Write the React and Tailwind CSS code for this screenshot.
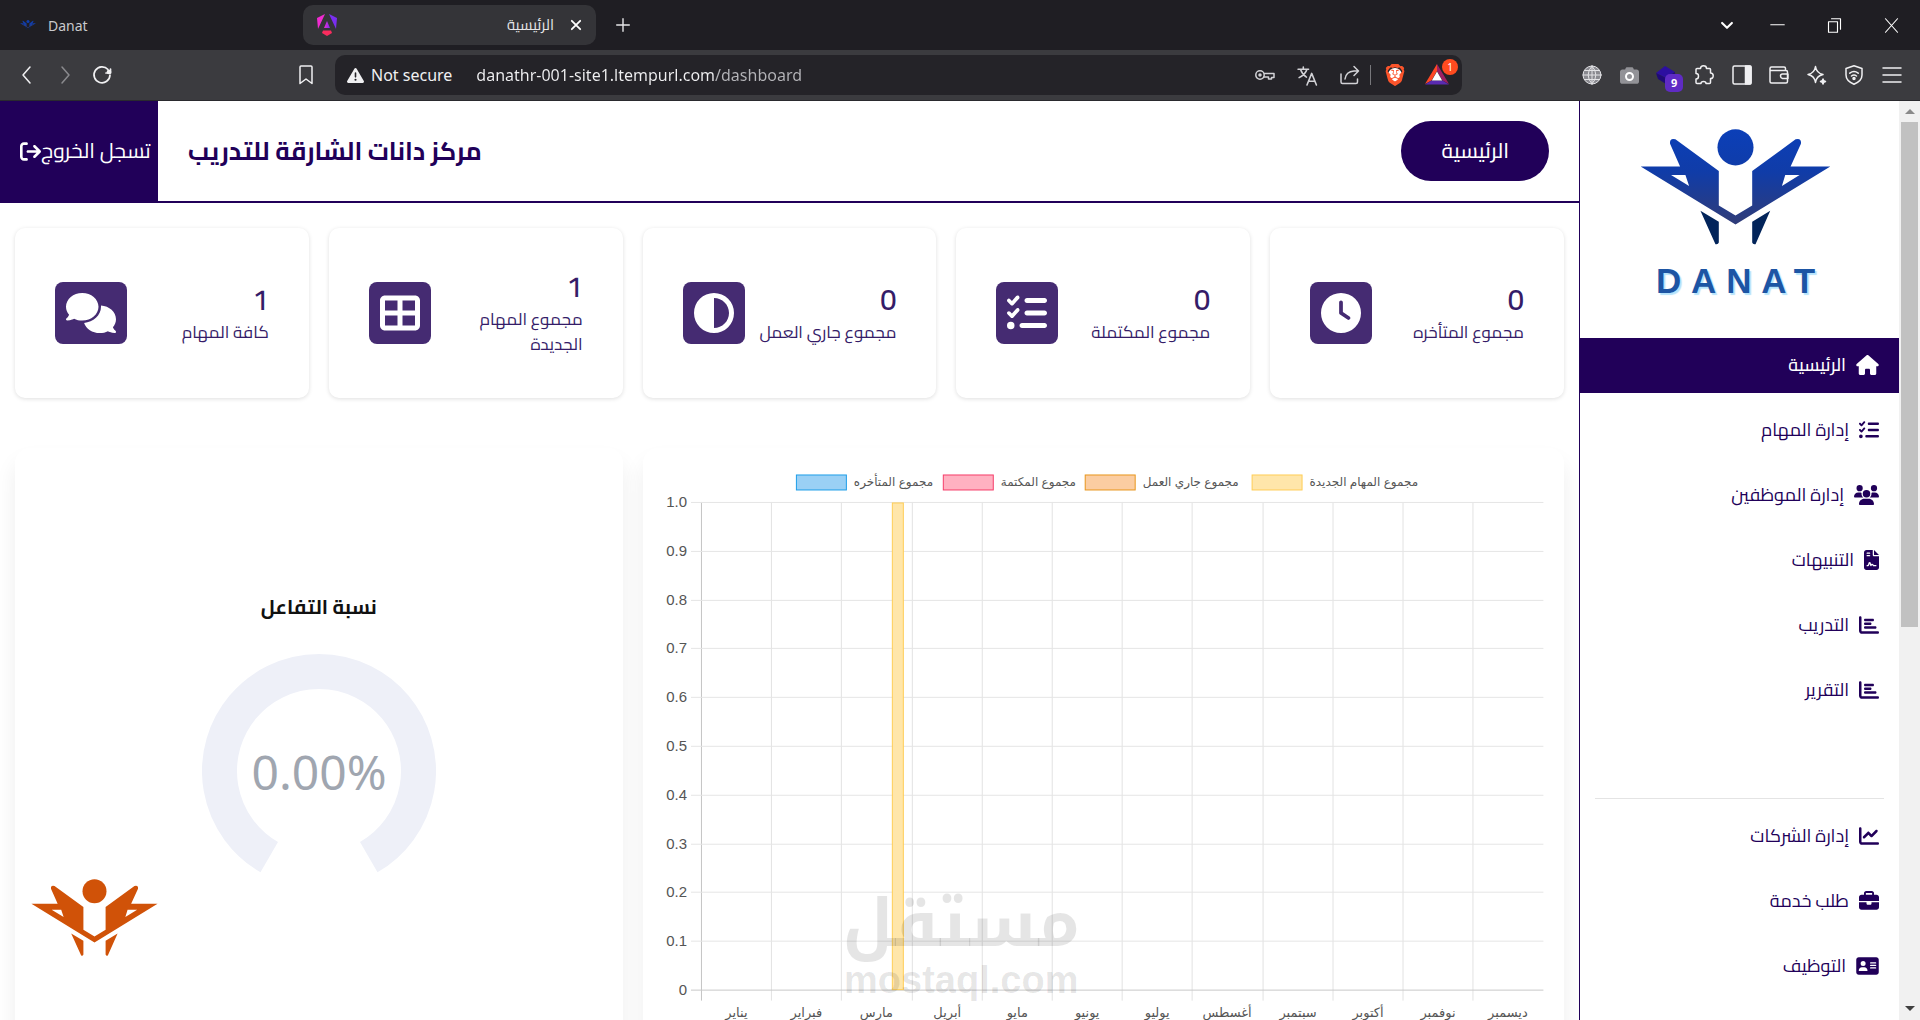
import React from 'react';
import { SiBrave } from 'react-icons/si';
import {
  FaAddressCard,
  FaArrowRightFromBracket,
  FaBriefcase,
  FaCamera,
  FaChartBar,
  FaChartLine,
  FaCircleHalfStroke,
  FaClock,
  FaComments,
  FaFileContract,
  FaHouse,
  FaListCheck,
  FaTableCellsLarge,
  FaTriangleExclamation,
  FaUsers,
} from 'react-icons/fa6';

const stats = [
  { label: 'كافة المهام', value: 1, Icon: FaComments, size: 'h-10 w-[50px]' },
  { label: 'مجموع المهام الجديدة', value: 1, Icon: FaTableCellsLarge },
  { label: 'مجموع جاري العمل', value: 0, Icon: FaCircleHalfStroke },
  { label: 'مجموع المكتملة', value: 0, Icon: FaListCheck },
  { label: 'مجموع المتأخره', value: 0, Icon: FaClock },
];

const mainLinks = [
  { label: 'الرئيسية', Icon: FaHouse, size: 'h-5 w-[23px]', active: true },
  { label: 'إدارة المهام', Icon: FaListCheck },
  { label: 'إدارة الموظفين', Icon: FaUsers, size: 'h-5 w-[25px]' },
  { label: 'التنبيهات', Icon: FaFileContract, size: 'h-5 w-[15px]' },
  { label: 'التدريب', Icon: FaChartBar },
  { label: 'التقرير', Icon: FaChartBar },
];

const moreLinks = [
  { label: 'إدارة الشركات', Icon: FaChartLine },
  { label: 'طلب خدمة', Icon: FaBriefcase },
  { label: 'التوظيف', Icon: FaAddressCard, size: 'h-5 w-[23px]' },
];

const months = ['يناير', 'فبراير', 'مارس', 'أبريل', 'مايو', 'يونيو', 'يوليو', 'أغسطس', 'سبتمبر', 'أكتوبر', 'نوفمبر', 'ديسمبر'];

const series = [
  { label: 'مجموع المتأخره', x: 153, fill: '#9ad0f5', stroke: '#1d9de8' },
  { label: 'مجموع المكتمة', x: 300, fill: '#ffb1c1', stroke: '#f53d69' },
  { label: 'مجموع جاري العمل', x: 442, fill: '#fbcda2', stroke: '#e8961c' },
  { label: 'مجموع المهام الجديدة', x: 609, fill: '#ffe6aa', stroke: '#ffcd56' },
];

const Figure = () => (
  <>
    <circle cx="496" cy="141" r="54" />
    <path
      fillRule="evenodd"
      d="M212 198H330L300 130Q298 112 316 117L446 212V315L496 345L546 315V212L676 117Q694 112 692 130L661 198H780L496 372ZM303 224L357 257L346 224ZM688 224L635 257L645 224Z"
    />
  </>
);

const Feet = () => (
  <path d="M391 331L446 364V426Q444 433 436 431ZM600 331L546 364V426Q548 433 556 431Z" />
);

const BlueMark = ({ className }) => (
  <svg viewBox="210 86 572 348" className={className} aria-hidden="true">
    <defs>
      <linearGradient id="mark" x1="0" y1="86" x2="0" y2="372" gradientUnits="userSpaceOnUse">
        <stop offset="0" stopColor="#0b3fb8" />
        <stop offset="0.45" stopColor="#103ca8" />
        <stop offset="1" stopColor="#303c78" />
      </linearGradient>
    </defs>
    <g fill="url(#mark)">
      <Figure />
    </g>
    <g fill="#02245a">
      <Feet />
    </g>
  </svg>
);

const OrangeMark = ({ className }) => (
  <svg viewBox="210 86 572 348" className={className} fill="#d05208" aria-hidden="true">
    <Figure />
    <Feet />
  </svg>
);

const Stroke = ({ className = 'size-5', children, width = 1.5 }) => (
  <svg viewBox="0 0 20 20" className={className} fill="none" stroke="currentColor" strokeWidth={width} strokeLinecap="round" strokeLinejoin="round" aria-hidden="true">
    {children}
  </svg>
);

const TabStrip = () => (
  <div className="flex h-[50px] items-center bg-[#1f1e23] pl-5 text-[14px] text-[#e6e6e8]">
    <button className="flex w-[283px] items-center gap-3 text-[#c9c9cc]">
      <BlueMark className="w-4" />
      Danat
    </button>
    <div className="flex h-10 w-[293px] items-center rounded-[10px] bg-[#343438] pr-[14px] pl-[14px]">
      <svg viewBox="0 0 20 22" className="h-[22px] w-5" aria-hidden="true">
        <defs>
          <linearGradient id="ng" x1="0" x2="1">
            <stop offset="0" stopColor="#f02bd0" />
            <stop offset="1" stopColor="#7a2ff0" />
          </linearGradient>
        </defs>
        <path fill="#f02bd0" d="M8 0L0 4L1 15Z" />
        <path fill="#7a2ff0" d="M12 0L20 4L19 15Z" />
        <path fill="url(#ng)" d="M10 7L13 14H7Z" />
        <path fill="#fa2c5e" d="M6 16.500H14L15 19L10 22L5 19Z" />
      </svg>
      <span className="ml-auto font-['Cairo','Noto_Sans',sans-serif] text-[15px]" dir="rtl">الرئيسية</span>
      <button aria-label="Close tab" className="ml-4 text-white">
        <Stroke className="size-3" width={3}><path d="M3 3L17 17M17 3L3 17" /></Stroke>
      </button>
    </div>
    <button aria-label="New tab" className="ml-5">
      <Stroke className="size-[14px]" width={2}><path d="M10 1V19M1 10H19" /></Stroke>
    </button>
    <div className="mr-[21px] ml-auto flex items-center gap-[42px] text-white">
      <button aria-label="Search tabs" className="-mr-[6px]"><Stroke className="size-[14px]" width={3}><path d="M3 7L10 14L17 7" /></Stroke></button>
      <button aria-label="Minimize"><Stroke className="size-[15px]" width={1.5}><path d="M1 9H19" /></Stroke></button>
      <button aria-label="Restore"><Stroke className="size-[15px]" width={1.5}><path d="M2 5H14V19H2ZM6 1H18V15" /></Stroke></button>
      <button aria-label="Close"><Stroke className="size-[15px]" width={1.5}><path d="M2 1L18 19M18 1L2 19" /></Stroke></button>
    </div>
  </div>
);

const Toolbar = () => (
  <div className="flex h-[51px] items-center border-b border-[#2a2a2e] bg-[#3b3b3f] pl-[17px] text-[#f0f0f2]">
    <button aria-label="Back"><Stroke><path d="M13 2L6 10L13 18" /></Stroke></button>
    <button aria-label="Forward" className="ml-[18px] text-[#8a8a8e]"><Stroke><path d="M7 2L14 10L7 18" /></Stroke></button>
    <button aria-label="Reload" className="ml-[17px]">
      <Stroke width={1.7}>
        <path d="M16 4.500A8 8 0 1 0 18 10M18.500 4V8H14" />
        <circle cx="17" cy="7" r="1.500" fill="currentColor" />
      </Stroke>
    </button>
    <button aria-label="Bookmark" className="ml-[184px]"><Stroke><path d="M5 1H15Q16 1 16 2V18.500L10 14L4 18.500V2Q4 1 5 1Z" /></Stroke></button>
    <div className="ml-[19px] flex h-10 w-[1127px] items-center rounded-[10px] bg-[#242328] pr-[13px] pl-3 text-base">
      <FaTriangleExclamation className="size-[17px]" />
      <span className="ml-[7px] shrink-0">Not secure</span>
      <input
        type="text"
        aria-label="Address"
        dir="ltr"
        defaultValue="danathr-001-site1.ltempurl.com/dashboard"
        className="ml-6 min-w-0 flex-1 bg-[linear-gradient(90deg,#f0f0f2_239px,#b4b4b8_239px)] bg-clip-text text-transparent outline-none"
      />
      <div className="flex items-center gap-[22px] text-[#d2d2d6]">
        <button aria-label="Passwords">
          <Stroke><circle cx="5" cy="10" r="4.200" /><circle cx="5" cy="10" r="1" fill="currentColor" /><path d="M9.500 8.500H19V12.500H16.500V14H13.500V12H9" /></Stroke>
        </button>
        <button aria-label="Translate">
          <Stroke className="size-[21px]"><path d="M1 4H11M6 2V4M9.500 4Q8 9 2 12M3.500 4.500Q5 9 9 11.500M9.500 19L14 8L18.500 19M11 15.500H17" /></Stroke>
        </button>
        <button aria-label="Share">
          <Stroke><path d="M1 9V17Q1 18.500 2.500 18.500H16Q17.500 18.500 17.500 17V14M5 14Q6 6.500 14 6H18.500M14 1.500L18.500 6L14 10.500" /></Stroke>
        </button>
      </div>
      <div className="ml-[10px] h-5 w-px bg-[#77777b]" />
      <button aria-label="Brave Shields" className="relative ml-[13px]">
        <span className="absolute top-1 left-1 h-[14px] w-[14px] rounded-full bg-white" />
        <SiBrave className="relative size-[22px] text-[#fb542b]" />
      </button>
      <button aria-label="Rewards" className="relative ml-[19px]">
        <svg viewBox="0 0 24 22" className="h-[22px] w-6" aria-hidden="true">
          <path fill="#ff4724" d="M12 0L0 20L6.500 16.500L12 7Z" />
          <path fill="#9e1f63" d="M12 0L24 20L17.500 16.500L12 7Z" />
          <path fill="#5a2bb0" d="M0 20.500L6.500 16.500H17.500L24 20.500Z" />
          <path fill="#fff" d="M12 7.500L17.200 16.500H6.800Z" />
        </svg>
        <span className="absolute -top-[5px] -right-[9px] size-4 rounded-full bg-[#ff4b1f] text-center text-[10px] leading-4 text-white">1</span>
      </button>
    </div>
    <div className="mr-[18px] ml-auto flex w-[320px] items-center justify-between">
      <button aria-label="Web extension">
        <Stroke className="size-5 text-[#e3e3e6]" width={1}>
          <circle cx="10" cy="10" r="9" fill="#8a8a90" />
          <path d="M10 1V19M1 10H19M2.500 5.500H17.500M2.500 14.500H17.500M10 1Q2 10 10 19M10 1Q18 10 10 19" />
        </Stroke>
      </button>
      <button aria-label="Screenshot extension" className="relative">
        <FaCamera className="size-[19px] text-[#929297]" />
        <span className="absolute top-[6px] left-[5px] size-[9px] rounded-full border-2 border-white bg-[#929297]" />
      </button>
      <button aria-label="Layers extension" className="relative">
        <svg viewBox="0 0 20 20" className="size-5" aria-hidden="true">
          <path fill="#2c0fa0" d="M9 1L19 7L10 13L0 8Z" />
          <path fill="#1f0a78" d="M0 8L10 13L19 7V13L10 19L2 14Z" />
        </svg>
        <span className="absolute top-[9px] left-[9px] size-[18px] rounded-[5px] bg-[#5f2bc4] text-center text-[11px] leading-[18px] font-bold text-white">9</span>
      </button>
      <button aria-label="Extensions">
        <Stroke><path d="M2 4.500Q2 3.500 3 3.500H6.500Q6.500 0.800 9.500 0.800T12.500 3.500H15.500Q16.500 3.500 16.500 4.500V8Q19.200 8 19.200 10.800T16.500 13.500V17.500Q16.500 18.500 15.500 18.500H12Q12 16.500 9.500 16.500T7 18.500H3Q2 18.500 2 17.500V14Q4.500 14 4.500 11.200T2 8.500Z" /></Stroke>
      </button>
      <button aria-label="Side panel">
        <Stroke><rect x="1" y="1" width="18" height="18" rx="1.500" /><path d="M13.500 1H18Q19 1 19 2V18Q19 19 18 19H13.500Z" fill="currentColor" /></Stroke>
      </button>
      <button aria-label="Wallet">
        <Stroke><path d="M16.500 5.500V3.500Q16.500 2 15 2H2.500Q1 2 1 3.500V16.500Q1 18 2.500 18H17Q18.500 18 18.500 16.500V7Q18.500 5.500 17 5.500H1M19 9H13.500Q11.500 9 11.500 11T13.500 13.500H19Z" /></Stroke>
      </button>
      <button aria-label="Leo AI">
        <Stroke><path d="M8.500 1.500Q9.500 8.200 16 9.500Q9.500 10.800 8.500 17.500Q7.500 10.800 1 9.500Q7.500 8.200 8.500 1.500Z" /><path fill="currentColor" d="M16 14L16.700 15.800L18.500 16.500L16.700 17.200L16 19L15.300 17.200L13.500 16.500L15.300 15.800Z" /></Stroke>
      </button>
      <button aria-label="VPN">
        <Stroke><path d="M10 0.800L18 3.500V10Q18 16 10 19.200Q2 16 2 10V3.500ZM5.800 8.200Q10 5 14.200 8.200M7.500 11Q10 9 12.500 11" /><circle cx="10" cy="13.500" r="1" fill="currentColor" /></Stroke>
      </button>
      <button aria-label="Menu"><Stroke><path d="M1 3H19M1 10H19M1 17H19" /></Stroke></button>
    </div>
  </div>
);

const Header = () => (
  <header className="flex h-[102px] items-center border-b-2 border-[#210059] text-[#210059]">
    <button dir="rtl" className="flex w-[158px] items-center justify-end self-stretch bg-[#210059] pl-5 text-[21px] text-white">
      تسجل الخروج
      <FaArrowRightFromBracket className="size-[21px]" />
    </button>
    <h1 dir="rtl" className="ml-[30px] text-[25px] font-bold">مركز دانات الشارقة للتدريب</h1>
    <a href="#home" dir="rtl" className="mr-[30px] ml-auto rounded-[30px] bg-[#210059] px-10 text-[21px] leading-[60px] font-medium text-white">
      الرئيسية
    </a>
  </header>
);

const StatCard = ({ label, value, Icon, size = 'size-10' }) => (
  <div dir="rtl" className="flex h-[170px] items-center justify-between rounded-[10px] bg-white px-10 shadow-[0_1px_4px_rgba(0,0,0,0.13)]">
    <div className="min-w-0 flex-1 pt-0.5 text-[#351c68]">
      <p className="mb-1 text-[29px] leading-8 font-semibold">{value}</p>
      <p className="text-[17px] leading-[25px]">{label}</p>
    </div>
    <div className="rounded-lg bg-[#452b72] p-[11px] text-white">
      <Icon className={size} />
    </div>
  </div>
);

const Gauge = () => (
  <section className="col-span-2 flex flex-col items-center rounded-[15px] bg-white pt-[145px] shadow-[0_14px_22px_rgba(0,0,0,0.07)]">
    <h2 dir="rtl" className="mb-[33px] text-[20px] leading-7 font-bold text-[#111]">نسبة التفاعل</h2>
    <svg viewBox="0 0 234 234" className="w-[234px]" role="img" aria-label="0.00%">
      <path d="M67.250 203.170A99.500 99.500 0 1 1 166.750 203.170" fill="none" stroke="#eef0f8" strokeWidth="35" />
      <text x="117" y="136" textAnchor="middle" className="fill-[#a0a6b0] font-['Noto_Sans',sans-serif] text-[48px]">0.00%</text>
    </svg>
  </section>
);

const LEFT = 58;
const TOP = 54;
const STEP_X = 70.2;
const STEP_Y = 48.8;

const Chart = () => {
  const bottom = TOP + 488;
  return (
    <section className="relative col-span-3 rounded-[15px] bg-white shadow-[0_14px_22px_rgba(0,0,0,0.07)]">
      <svg viewBox="0 0 922 600" className="block w-full font-['Liberation_Sans','DejaVu_Sans',sans-serif]">
        {series.map((s) => (
          <g key={s.label}>
            <rect x={s.x + 0.5} y="27" width="50" height="15" fill={s.fill} stroke={s.stroke} />
            <text x={s.x + 58} y="38" className="fill-[#555] text-[12px]">{s.label}</text>
          </g>
        ))}
        {months.map((m, i) => {
          const x = Math.round(LEFT + i * STEP_X) + 0.5;
          return (
            <g key={m}>
              <path d={`M${x} ${TOP}V${bottom + 11}`} stroke={i === 0 ? '#c4c4c4' : '#e2e2e2'} />
              <text x={x + 35} y="569" textAnchor="middle" className="fill-[#555] text-[13px]">{m}</text>
            </g>
          );
        })}
        {Array.from({ length: 11 }, (_, i) => {
          const y = Math.round(TOP + i * STEP_Y) + 0.5;
          return (
            <g key={i}>
              <path d={`M${LEFT - 10} ${y}H901`} stroke={i === 10 ? '#c8c8c8' : '#e5e5e5'} />
              <text x="44" y={y + 5} textAnchor="end" className="fill-[#555] text-[15px]">{i === 10 ? '0' : (1 - i / 10).toFixed(1)}</text>
            </g>
          );
        })}
        <rect x="249.500" y="55" width="11" height="487" fill="#ffe6aa" stroke="#ffcd56" />
      </svg>
      <div className="absolute top-[440px] left-[200px] flex flex-col items-center text-black/10">
        <span dir="rtl" className="font-['Noto_Kufi_Arabic','Cairo',sans-serif] text-[66px] leading-[72px] font-bold">مستقل</span>
        <span className="font-['Liberation_Sans',sans-serif] text-[38px] leading-10 font-bold">mostaql.com</span>
      </div>
    </section>
  );
};

const NavLink = ({ label, Icon, size = 'size-5', active }) => (
  <li>
    <a
      href="#page"
      className={`flex h-[55px] items-center gap-[10px] px-5 pb-0.5 text-[18px] ${active ? 'bg-[#210059] font-medium text-white' : 'text-[#210059]'}`}
    >
      <Icon className={size} />
      {label}
    </a>
  </li>
);

const Sidebar = () => (
  <aside dir="rtl" className="w-80 shrink-0 border-l border-[#210059] bg-white">
    <div dir="ltr" className="flex h-[237px] flex-col items-center pt-7">
      <div className="flex flex-col items-center pr-2">
        <BlueMark className="w-[191px]" />
        <span className="mt-4 ml-[10px] font-['Liberation_Sans',sans-serif] text-[35px] leading-10 font-bold tracking-[0.28em] text-[#1d55a4] [text-shadow:2px_2px_1px_#b5e3fb]">
          DANAT
        </span>
      </div>
    </div>
    <nav>
      <ul className="flex flex-col gap-[10px]">
        {mainLinks.map((link) => <NavLink key={link.label} {...link} />)}
      </ul>
      <hr className="mx-[15px] mt-20 mb-[10px] border-[#e4e4e4]" />
      <ul className="flex flex-col gap-[10px]">
        {moreLinks.map((link) => <NavLink key={link.label} {...link} />)}
      </ul>
    </nav>
  </aside>
);

const Scrollbar = () => (
  <div className="flex w-[21px] shrink-0 flex-col items-center justify-between bg-[#f1f1f1] px-0.5">
    <div className="flex h-[21px] items-center">
      <svg viewBox="0 0 10 5" className="w-[10px]" aria-hidden="true"><path d="M5 0L10 5H0Z" fill="#8a8a8a" /></svg>
    </div>
    <div className="h-[55%] w-full bg-[#c1c1c1]" />
    <div className="flex flex-1 items-end pb-[9px]">
      <svg viewBox="0 0 10 5" className="w-[10px]" aria-hidden="true"><path d="M5 5L10 0H0Z" fill="#404040" /></svg>
    </div>
  </div>
);

const App = () => {
  return (
    <div className="flex h-screen flex-col overflow-hidden bg-white font-['Noto_Sans',sans-serif]">
      <TabStrip />
      <Toolbar />
      <div className="flex min-h-0 flex-1 font-['Cairo','Noto_Sans',sans-serif]">
        <main className="relative min-w-0 flex-1 overflow-hidden">
          <Header />
          <div className="grid grid-cols-5 gap-5 px-[15px] pt-[25px]">
            {stats.map((s) => <StatCard key={s.label} {...s} />)}
          </div>
          <div className="mt-[50px] grid grid-cols-5 gap-5 px-[15px]">
            <Gauge />
            <Chart />
          </div>
          <button aria-label="Danat" className="absolute bottom-16 left-[31px]">
            <OrangeMark className="w-[127px]" />
          </button>
        </main>
        <Sidebar />
        <Scrollbar />
      </div>
    </div>
  );
};

export default App;
